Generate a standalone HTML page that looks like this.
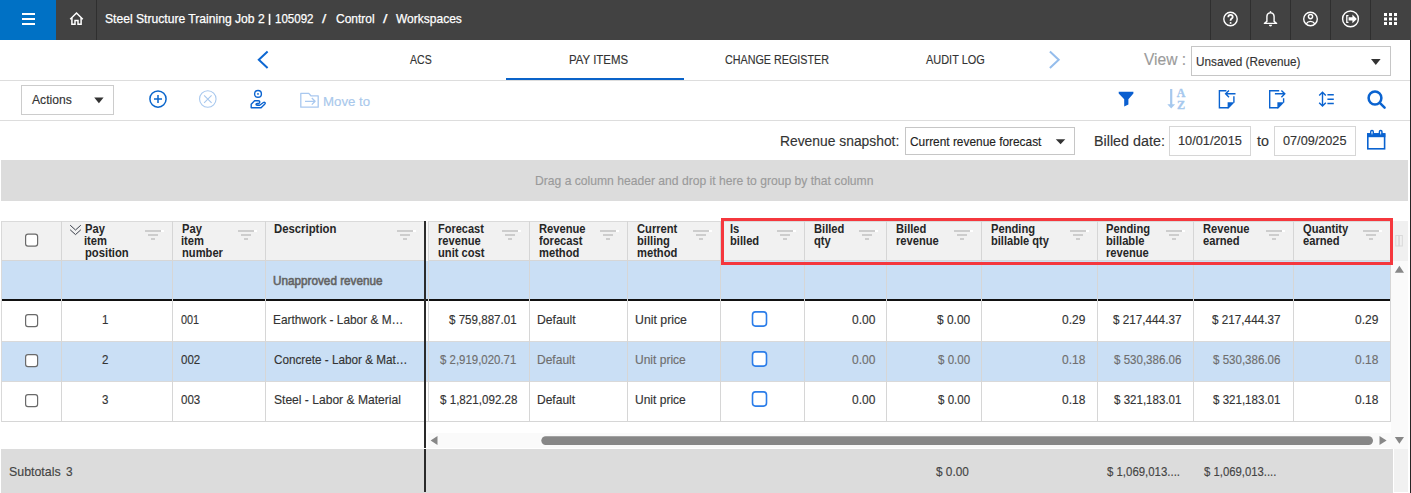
<!DOCTYPE html>
<html><head><meta charset="utf-8"><style>
html,body{margin:0;padding:0;width:1411px;height:493px;overflow:hidden;background:#fff;}
body{position:relative;font-family:"Liberation Sans",sans-serif;}
.tx{position:absolute;white-space:nowrap;line-height:1;transform-origin:0 0;}
.a{position:absolute;}
</style></head><body>
<svg class="a" style="left:0;top:0" width="1411" height="493" viewBox="0 0 1411 493">
<g shape-rendering="crispEdges">
  <!-- top bar -->
  <rect x="0" y="0" width="1411" height="40" fill="#424242"/>
  <rect x="0" y="0" width="56" height="40" fill="#0071c5"/>
  <rect x="96" y="0" width="1" height="40" fill="#2f2f2f"/>
  <rect x="1210" y="0" width="1" height="40" fill="#2f2f2f"/>
  <rect x="1250" y="0" width="1" height="40" fill="#2f2f2f"/>
  <rect x="1290" y="0" width="1" height="40" fill="#2f2f2f"/>
  <rect x="1330" y="0" width="1" height="40" fill="#2f2f2f"/>
  <rect x="1370" y="0" width="1" height="40" fill="#2f2f2f"/>
  <rect x="268.7" y="13.8" width="1.7" height="11.2" fill="#fff" shape-rendering="auto"/>
  <!-- hamburger -->
  <rect x="22" y="13" width="13" height="2" fill="#fff"/>
  <rect x="22" y="18" width="13" height="2" fill="#fff"/>
  <rect x="22" y="23" width="13" height="2" fill="#fff"/>
  <!-- right border -->
  <rect x="1410" y="40" width="1" height="453" fill="#262626"/>
  <!-- nav line -->
  <rect x="0" y="80" width="1410" height="1" fill="#dddddd"/>
  <rect x="506" y="78" width="178" height="2" fill="#0a63c9"/>
  <!-- view dropdown -->
  <rect x="1191.5" y="46.5" width="199" height="29" fill="#fff" stroke="#c6c6c6" stroke-width="1"/>
  <!-- toolbar line -->
  <rect x="0" y="120" width="1410" height="1" fill="#dddddd"/>
  <rect x="21.5" y="85.5" width="92" height="29" fill="#fff" stroke="#cccccc" stroke-width="1"/>
  <!-- snapshot -->
  <rect x="905.5" y="127.5" width="169" height="27" fill="#fff" stroke="#c6c6c6" stroke-width="1"/>
  <rect x="1169.5" y="126.5" width="81" height="29" fill="#fff" stroke="#d6d6d6" stroke-width="1"/>
  <rect x="1274.5" y="126.5" width="81" height="29" fill="#fff" stroke="#d6d6d6" stroke-width="1"/>
  <!-- group bar -->
  <rect x="1" y="160" width="1407" height="41" fill="#dcdcdc"/>
  <!-- grid header -->
  <rect x="1" y="221" width="1390" height="39" fill="#f1f1f1"/>
  <rect x="1" y="221" width="1390" height="1" fill="#dadada"/>
  <rect x="1" y="260" width="1390" height="1" fill="#d6d6d6"/>
  <rect x="1391" y="221" width="17" height="40" fill="#f0f0f0"/>
  <!-- unapproved row -->
  <rect x="1" y="261" width="1390" height="38" fill="#cadff5"/>
  <rect x="1" y="299" width="1390" height="2" fill="#111"/>
  <!-- row 2 -->
  <rect x="1" y="341" width="1390" height="40" fill="#cadff5"/>
  <rect x="1" y="341" width="1390" height="1" fill="#d9d9d9"/>
  <rect x="1" y="381" width="1390" height="1" fill="#d9d9d9"/>
  <rect x="1" y="421" width="1390" height="1" fill="#d6d6d6"/>
  <!-- left border -->
  <rect x="1" y="221" width="1" height="201" fill="#d9d9d9"/>
  <!-- column lines -->
  <g fill="#d6d6d6">
    <rect x="61" y="221" width="1" height="201"/>
    <rect x="172" y="221" width="1" height="201"/>
    <rect x="265" y="221" width="1" height="201"/>
    <rect x="428" y="221" width="1" height="201"/>
    <rect x="529" y="221" width="1" height="201"/>
    <rect x="627" y="221" width="1" height="201"/>
    <rect x="720" y="221" width="1" height="201"/>
    <rect x="804" y="221" width="1" height="201"/>
    <rect x="886" y="221" width="1" height="201"/>
    <rect x="981" y="221" width="1" height="201"/>
    <rect x="1097" y="221" width="1" height="201"/>
    <rect x="1193" y="221" width="1" height="201"/>
    <rect x="1293" y="221" width="1" height="201"/>
    <rect x="1390" y="221" width="1" height="201"/>
  </g>
  <!-- h scroll track -->
  <rect x="1391" y="261" width="17" height="188" fill="#fafafa"/>
  <rect x="428" y="433" width="963" height="15" fill="#fafafa"/>
  <!-- footer -->
  <rect x="1" y="449" width="1392" height="44" fill="#dcdcdc"/>
  <rect x="1393" y="449" width="1" height="44" fill="#ffffff"/>
  <rect x="1394" y="449" width="14" height="43" fill="#f1f1f1"/>
  <!-- frozen divider -->
  <rect x="424" y="221" width="2" height="227" fill="#2b2b2b"/>
  <rect x="424" y="449" width="2" height="43" fill="#2b2b2b"/>
  <rect x="426" y="221" width="2" height="40" fill="#f7f7f7"/>
</g>

<!-- ===== icons ===== -->
<g fill="none" stroke="#fff" stroke-width="1.5" stroke-linejoin="miter">
  <!-- home -->
  <path d="M70.2 19.2 L76.5 13 L82.8 19.2"/>
  <path d="M71.9 18 V24.2 H75 V20.4 H78 V24.2 H81.1 V18"/>
  <!-- help -->
  <circle cx="1230.5" cy="19" r="6.7" stroke-width="1.4"/>
  <path d="M1228.3 17.2 C1228.3 15.6 1229.3 14.9 1230.5 14.9 C1231.8 14.9 1232.7 15.7 1232.7 16.9 C1232.7 18.4 1230.6 18.6 1230.6 20.3 V20.8" stroke-width="1.8"/>
  <!-- user -->
  <circle cx="1310.5" cy="19" r="6.8" stroke-width="1.4"/>
  <circle cx="1310.5" cy="16.6" r="2.1" stroke-width="1.4"/>
  <path d="M1306.2 23.8 C1307.2 22.2 1308.7 21.4 1310.5 21.4 C1312.3 21.4 1313.8 22.2 1314.8 23.8" stroke-width="1.4"/>
  <!-- logout -->
  <circle cx="1350.5" cy="18.9" r="7.9" stroke-width="1.4"/>
  <path d="M1348.5 15.6 H1346.8 V22.3 H1348.5" stroke-width="1.3"/>
</g>
<g fill="#fff">
  <circle cx="1230.6" cy="22.9" r="0.95"/>
  <path d="M1348.6 17.3 H1352.4 V14.6 L1356.9 18.9 L1352.4 23.2 V20.5 H1348.6 Z"/>
  <!-- bell -->
  <path d="M1270.5 12 C1267.6 12.1 1266.2 14.1 1266.2 16.6 V21.1 L1263.8 23.1 V24.1 H1277.2 V23.1 L1274.8 21.1 V16.6 C1274.8 14.1 1273.4 12.1 1270.5 12 Z M1267.6 16.7 C1267.6 14.6 1268.7 13.4 1270.5 13.4 C1272.3 13.4 1273.4 14.6 1273.4 16.7 V21.7 L1274.7 22.8 H1266.3 L1267.6 21.7 Z" fill-rule="evenodd"/>
  <circle cx="1270.5" cy="11.7" r="0.8"/>
  <path d="M1268.9 24.7 H1272.1 A1.6 1.7 0 0 1 1268.9 24.7 Z"/>
  <!-- grid -->
  <rect x="1384" y="13" width="3" height="3"/><rect x="1389" y="13" width="3" height="3"/><rect x="1394" y="13" width="3" height="3"/>
  <rect x="1384" y="17.5" width="3" height="3"/><rect x="1389" y="17.5" width="3" height="3"/><rect x="1394" y="17.5" width="3" height="3"/>
  <rect x="1384" y="22" width="3" height="3"/><rect x="1389" y="22" width="3" height="3"/><rect x="1394" y="22" width="3" height="3"/>
</g>
<!-- nav chevrons -->
<path d="M267.6 51.5 L258.8 59.8 L267.6 68.1" fill="none" stroke="#0d67d2" stroke-width="2"/>
<path d="M1049.9 51.5 L1058.7 59.8 L1049.9 68.1" fill="none" stroke="#95bdec" stroke-width="2"/>
<!-- dropdown triangles -->
<path d="M1371 59 H1380.6 L1375.8 65 Z" fill="#333"/>
<path d="M94.2 97.5 H103.6 L98.9 103.2 Z" fill="#333"/>
<path d="M1055.8 139.2 H1065.3 L1060.55 144.2 Z" fill="#333"/>
<!-- toolbar left icons -->
<g fill="none" stroke="#0a66cc" stroke-width="1.5">
  <circle cx="158" cy="99.05" r="8.1"/>
  <path d="M154 99.1 H162 M158 95.1 V103.1"/>
</g>
<g fill="none" stroke="#a8c8ee" stroke-width="1.1">
  <circle cx="207.8" cy="99" r="8.25"/>
  <path d="M204.1 95.3 L211.6 102.8 M211.6 95.3 L204.1 102.8"/>
</g>
<g fill="none" stroke="#0a63d0" stroke-width="1.4" stroke-linejoin="round">
  <circle cx="258" cy="93.9" r="3.4"/>
  <path d="M261.1 107.7 H251.2 V104.3 L254.6 100.7 H258.4 C260.3 100.7 260.3 103.5 258.4 103.5 H257.2 C255.6 103.5 255.6 105.2 257.2 105.2 H259.7 L263.4 102.5 C264.5 101.8 265.7 102.9 264.9 103.9 Z"/>
</g>
<circle cx="258" cy="93.9" r="0.9" fill="#0a63d0"/>
<g fill="none" stroke="#a9c8ef" stroke-width="1.3" stroke-linejoin="round">
  <path d="M300.8 93.4 H308.8 L310.9 95.8 H318.2 V107.2 H300.8 Z"/>
  <path d="M305 101.3 H315 M311.8 98 L315.1 101.3 L311.8 104.6"/>
</g>
<!-- right toolbar icons -->
<path d="M1118.7 91.8 H1133.4 V93.4 L1128.4 99.2 V104.6 L1124.2 106.6 V99.2 L1118.7 93.4 Z" fill="#0a5fd0"/>
<g fill="#a6c8ee">
  <rect x="1170.1" y="89" width="2.2" height="16.5"/>
  <path d="M1167.3 104.3 H1175.1 L1171.2 108.6 Z"/>
</g>
<text x="1181.1" y="97.1" font-family="Liberation Serif" font-weight="bold" font-size="11.8" text-anchor="middle" fill="#a6c8ee" stroke="#a6c8ee" stroke-width="0.3">A</text>
<text x="1181.1" y="108.6" font-family="Liberation Serif" font-weight="bold" font-size="12.2" text-anchor="middle" fill="#a6c8ee" stroke="#a6c8ee" stroke-width="0.3">Z</text>
<g fill="none" stroke="#0a63d0" stroke-width="1.4">
  <path d="M1226.4 90.7 H1219.4 V107.7 H1228.3 M1233.9 96.2 V102.6"/>
  <path d="M1225.6 93.8 H1235.5 M1229 90.4 L1225.6 93.8 L1229 97.2"/>
  <path d="M1279.2 90.7 H1269.7 V107.7 H1278.1 M1283.6 98.3 V102.6"/>
  <path d="M1274.9 93.8 H1284.8 M1281.4 90.4 L1284.8 93.8 L1281.4 97.2"/>
  <path d="M1322.5 92.6 V105.8 M1319.2 95.6 L1322.5 92.3 L1325.8 95.6 M1319.2 102.8 L1322.5 106.1 L1325.8 102.8 M1327.4 94.8 H1333.8 M1327.4 99.3 H1333.8 M1327.4 103.5 H1333.8"/>
</g>
<g fill="#0a63d0">
  <path d="M1227.6 102.3 H1234.6 L1228.6 108.4 H1227.6 Z"/>
  <path d="M1277.4 102.3 H1284.3 L1278.3 108.4 H1277.4 Z"/>
</g>
<g fill="none" stroke="#0a63d0" stroke-width="2.5" stroke-linecap="round">
  <circle cx="1375" cy="98" r="6.4"/>
  <path d="M1380.3 103.3 L1384.6 107.6"/>
</g>
<!-- calendar -->
<g fill="none" stroke="#0a63d0" stroke-width="1.6">
  <rect x="1367.8" y="134" width="16.8" height="14.8"/>
  <rect x="1370.8" y="130.6" width="2.4" height="4.6" rx="1.1"/>
  <rect x="1379.5" y="130.6" width="2.4" height="4.6" rx="1.1"/>
</g>
<rect x="1367" y="133.2" width="18.4" height="4" fill="#0a63d0"/>
<rect x="1371.6" y="131.4" width="0.8" height="3" fill="#fff"/>
<rect x="1380.3" y="131.4" width="0.8" height="3" fill="#fff"/>
<!-- header checkbox & row checkboxes -->
<g fill="#fff" stroke="#6a6a6a" stroke-width="1.2">
  <rect x="25.6" y="234.2" width="12" height="12" rx="2.4"/>
  <rect x="25.6" y="314.6" width="12" height="12" rx="2.4"/>
  <rect x="25.6" y="354.6" width="12" height="12" rx="2.4"/>
  <rect x="25.6" y="394.6" width="12" height="12" rx="2.4"/>
</g>
<g fill="#fff" stroke="#2b7de9" stroke-width="1.6">
  <rect x="752.5" y="311.9" width="14" height="14.2" rx="3"/>
  <rect x="752.5" y="351.9" width="14" height="14.2" rx="3"/>
  <rect x="752.5" y="391.9" width="14" height="14.2" rx="3"/>
</g>
<!-- double chevron -->
<path d="M70.2 225.2 L75.5 230 L80.8 225.2 M70.2 229.8 L75.5 234.6 L80.8 229.8" fill="none" stroke="#3a3f4a" stroke-width="1"/>
<!-- header filter icons -->
<g shape-rendering="crispEdges">
  <rect x="145" y="230" width="16" height="2" fill="#cdcdcd"/><rect x="161" y="230" width="3" height="2" fill="#fff"/><rect x="148" y="234" width="10" height="2" fill="#cdcdcd"/><rect x="151" y="238" width="4" height="2" fill="#cdcdcd"/>
  <rect x="238" y="230" width="16" height="2" fill="#cdcdcd"/><rect x="254" y="230" width="3" height="2" fill="#fff"/><rect x="241" y="234" width="10" height="2" fill="#cdcdcd"/><rect x="244" y="238" width="4" height="2" fill="#cdcdcd"/>
  <rect x="397" y="230" width="16" height="2" fill="#cdcdcd"/><rect x="413" y="230" width="3" height="2" fill="#fff"/><rect x="400" y="234" width="10" height="2" fill="#cdcdcd"/><rect x="403" y="238" width="4" height="2" fill="#cdcdcd"/>
  <rect x="502" y="230" width="16" height="2" fill="#cdcdcd"/><rect x="518" y="230" width="3" height="2" fill="#fff"/><rect x="505" y="234" width="10" height="2" fill="#cdcdcd"/><rect x="508" y="238" width="4" height="2" fill="#cdcdcd"/>
  <rect x="600" y="230" width="16" height="2" fill="#cdcdcd"/><rect x="616" y="230" width="3" height="2" fill="#fff"/><rect x="603" y="234" width="10" height="2" fill="#cdcdcd"/><rect x="606" y="238" width="4" height="2" fill="#cdcdcd"/>
  <rect x="693" y="230" width="16" height="2" fill="#cdcdcd"/><rect x="709" y="230" width="3" height="2" fill="#fff"/><rect x="696" y="234" width="10" height="2" fill="#cdcdcd"/><rect x="699" y="238" width="4" height="2" fill="#cdcdcd"/>
  <rect x="777" y="230" width="16" height="2" fill="#cdcdcd"/><rect x="793" y="230" width="3" height="2" fill="#fff"/><rect x="780" y="234" width="10" height="2" fill="#cdcdcd"/><rect x="783" y="238" width="4" height="2" fill="#cdcdcd"/>
  <rect x="859" y="230" width="16" height="2" fill="#cdcdcd"/><rect x="875" y="230" width="3" height="2" fill="#fff"/><rect x="862" y="234" width="10" height="2" fill="#cdcdcd"/><rect x="865" y="238" width="4" height="2" fill="#cdcdcd"/>
  <rect x="954" y="230" width="16" height="2" fill="#cdcdcd"/><rect x="970" y="230" width="3" height="2" fill="#fff"/><rect x="957" y="234" width="10" height="2" fill="#cdcdcd"/><rect x="960" y="238" width="4" height="2" fill="#cdcdcd"/>
  <rect x="1070" y="230" width="16" height="2" fill="#cdcdcd"/><rect x="1086" y="230" width="3" height="2" fill="#fff"/><rect x="1073" y="234" width="10" height="2" fill="#cdcdcd"/><rect x="1076" y="238" width="4" height="2" fill="#cdcdcd"/>
  <rect x="1166" y="230" width="16" height="2" fill="#cdcdcd"/><rect x="1182" y="230" width="3" height="2" fill="#fff"/><rect x="1169" y="234" width="10" height="2" fill="#cdcdcd"/><rect x="1172" y="238" width="4" height="2" fill="#cdcdcd"/>
  <rect x="1266" y="230" width="16" height="2" fill="#cdcdcd"/><rect x="1282" y="230" width="3" height="2" fill="#fff"/><rect x="1269" y="234" width="10" height="2" fill="#cdcdcd"/><rect x="1272" y="238" width="4" height="2" fill="#cdcdcd"/>
  <rect x="1363" y="230" width="16" height="2" fill="#cdcdcd"/><rect x="1379" y="230" width="3" height="2" fill="#fff"/><rect x="1366" y="234" width="10" height="2" fill="#cdcdcd"/><rect x="1369" y="238" width="4" height="2" fill="#cdcdcd"/>
</g>
<!-- column chooser -->
<g fill="none" stroke="#d9d9d9" stroke-width="1">
  <rect x="1395.8" y="235.5" width="3" height="10.5"/>
  <rect x="1399.3" y="235.5" width="3" height="10.5"/>
</g>
<!-- scroll arrows -->
<g fill="#878787">
  <path d="M1394.8 272.8 L1399.4 265.8 L1404 272.8 Z"/>
  <path d="M1394.8 437 H1404 L1399.4 443.8 Z"/>
  <path d="M437.5 436 V445 L430.6 440.5 Z"/>
  <path d="M1379.5 436 V445 L1386.6 440.5 Z"/>
  <rect x="541.3" y="436.2" width="831.7" height="8.8" rx="4.4"/>
</g>
<!-- red highlight -->
<rect x="722.5" y="219.5" width="669" height="44" fill="none" stroke="#f5373d" stroke-width="3"/>
</svg>

<div class="tx" style="left:105.00px;top:11.70px;font-size:13px;font-weight:400;color:#ffffff;-webkit-text-stroke:0.25px currentColor;transform:scaleX(0.9322)">Steel Structure Training Job 2</div>
<div class="tx" style="left:275.00px;top:11.70px;font-size:13px;font-weight:400;color:#ffffff;-webkit-text-stroke:0.25px currentColor;transform:scaleX(0.8864)">105092</div>
<div class="tx" style="left:322.10px;top:11.70px;font-size:13px;font-weight:400;color:#ffffff;-webkit-text-stroke:0.25px currentColor;transform:scaleX(1.1750)">/</div>
<div class="tx" style="left:335.60px;top:11.70px;font-size:13px;font-weight:400;color:#ffffff;-webkit-text-stroke:0.25px currentColor;transform:scaleX(0.9214)">Control</div>
<div class="tx" style="left:382.80px;top:11.70px;font-size:13px;font-weight:400;color:#ffffff;-webkit-text-stroke:0.25px currentColor;transform:scaleX(1.2250)">/</div>
<div class="tx" style="left:395.50px;top:11.70px;font-size:13px;font-weight:400;color:#ffffff;-webkit-text-stroke:0.25px currentColor;transform:scaleX(0.9239)">Workspaces</div>
<div class="tx" style="left:410.20px;top:54.00px;font-size:12.5px;font-weight:400;color:#333;-webkit-text-stroke:0.15px currentColor;transform:scaleX(0.8423)">ACS</div>
<div class="tx" style="left:568.99px;top:54.00px;font-size:12.5px;font-weight:400;color:#333;-webkit-text-stroke:0.15px currentColor;transform:scaleX(0.9141)">PAY ITEMS</div>
<div class="tx" style="left:724.80px;top:54.00px;font-size:12.5px;font-weight:400;color:#333;-webkit-text-stroke:0.15px currentColor;transform:scaleX(0.8603)">CHANGE REGISTER</div>
<div class="tx" style="left:925.60px;top:54.00px;font-size:12.5px;font-weight:400;color:#333;-webkit-text-stroke:0.15px currentColor;transform:scaleX(0.8761)">AUDIT LOG</div>
<div class="tx" style="left:1143.50px;top:50.90px;font-size:17px;font-weight:400;color:#9b9b9b;-webkit-text-stroke:0.15px currentColor;transform:scaleX(0.9178)">View :</div>
<div class="tx" style="left:1196.40px;top:54.90px;font-size:13px;font-weight:400;color:#333;-webkit-text-stroke:0.15px currentColor;transform:scaleX(0.9035)">Unsaved (Revenue)</div>
<div class="tx" style="left:32.30px;top:92.70px;font-size:13px;font-weight:400;color:#333;-webkit-text-stroke:0.15px currentColor;transform:scaleX(0.9326)">Actions</div>
<div class="tx" style="left:323.32px;top:95.00px;font-size:13.5px;font-weight:400;color:#a9c8ec;-webkit-text-stroke:0.15px currentColor;transform:scaleX(0.9809)">Move to</div>
<div class="tx" style="left:780.01px;top:133.10px;font-size:15.5px;font-weight:400;color:#333;-webkit-text-stroke:0.15px currentColor;transform:scaleX(0.8932)">Revenue snapshot:</div>
<div class="tx" style="left:910.20px;top:134.60px;font-size:13.5px;font-weight:400;color:#222;-webkit-text-stroke:0.15px currentColor;transform:scaleX(0.8800)">Current revenue forecast</div>
<div class="tx" style="left:1094.08px;top:133.10px;font-size:15.5px;font-weight:400;color:#333;-webkit-text-stroke:0.15px currentColor;transform:scaleX(0.9240)">Billed date:</div>
<div class="tx" style="left:1178.22px;top:134.20px;font-size:13px;font-weight:400;color:#333;-webkit-text-stroke:0.15px currentColor;transform:scaleX(0.9812)">10/01/2015</div>
<div class="tx" style="left:1256.50px;top:133.10px;font-size:15.5px;font-weight:400;color:#333;-webkit-text-stroke:0.15px currentColor;transform:scaleX(0.9231)">to</div>
<div class="tx" style="left:1283.30px;top:134.20px;font-size:13px;font-weight:400;color:#333;-webkit-text-stroke:0.15px currentColor;transform:scaleX(0.9754)">07/09/2025</div>
<div class="tx" style="left:535.40px;top:174.40px;font-size:13.5px;font-weight:400;color:#9a9a9a;-webkit-text-stroke:0.15px currentColor;transform:scaleX(0.8984)">Drag a column header and drop it here to group by that column</div>
<div class="tx" style="left:84.70px;top:222.60px;font-size:12.3px;font-weight:700;color:#262626;transform:scaleX(0.9079)">Pay</div>
<div class="tx" style="left:83.79px;top:235.00px;font-size:12.3px;font-weight:700;color:#262626;transform:scaleX(0.9079)">item</div>
<div class="tx" style="left:84.70px;top:247.00px;font-size:12.3px;font-weight:700;color:#262626;transform:scaleX(0.9149)">position</div>
<div class="tx" style="left:181.90px;top:222.60px;font-size:12.3px;font-weight:700;color:#262626;transform:scaleX(0.9079)">Pay</div>
<div class="tx" style="left:180.99px;top:235.00px;font-size:12.3px;font-weight:700;color:#262626;transform:scaleX(0.9079)">item</div>
<div class="tx" style="left:181.90px;top:247.00px;font-size:12.3px;font-weight:700;color:#262626;transform:scaleX(0.9079)">number</div>
<div class="tx" style="left:274.30px;top:222.60px;font-size:12.3px;font-weight:700;color:#262626;transform:scaleX(0.9224)">Description</div>
<div class="tx" style="left:437.70px;top:222.60px;font-size:12.3px;font-weight:700;color:#262626;transform:scaleX(0.8942)">Forecast</div>
<div class="tx" style="left:437.70px;top:235.00px;font-size:12.3px;font-weight:700;color:#262626;transform:scaleX(0.9079)">revenue</div>
<div class="tx" style="left:437.70px;top:247.00px;font-size:12.3px;font-weight:700;color:#262626;transform:scaleX(0.9079)">unit cost</div>
<div class="tx" style="left:538.60px;top:222.60px;font-size:12.3px;font-weight:700;color:#262626;transform:scaleX(0.9079)">Revenue</div>
<div class="tx" style="left:538.60px;top:235.00px;font-size:12.3px;font-weight:700;color:#262626;transform:scaleX(0.9079)">forecast</div>
<div class="tx" style="left:538.60px;top:247.00px;font-size:12.3px;font-weight:700;color:#262626;transform:scaleX(0.9079)">method</div>
<div class="tx" style="left:636.60px;top:222.60px;font-size:12.3px;font-weight:700;color:#262626;transform:scaleX(0.9079)">Current</div>
<div class="tx" style="left:636.60px;top:235.00px;font-size:12.3px;font-weight:700;color:#262626;transform:scaleX(0.9079)">billing</div>
<div class="tx" style="left:636.60px;top:247.00px;font-size:12.3px;font-weight:700;color:#262626;transform:scaleX(0.9079)">method</div>
<div class="tx" style="left:729.80px;top:222.60px;font-size:12.3px;font-weight:700;color:#262626;transform:scaleX(0.9079)">Is</div>
<div class="tx" style="left:729.80px;top:235.00px;font-size:12.3px;font-weight:700;color:#262626;transform:scaleX(0.9079)">billed</div>
<div class="tx" style="left:814.00px;top:222.60px;font-size:12.3px;font-weight:700;color:#262626;transform:scaleX(0.9079)">Billed</div>
<div class="tx" style="left:814.00px;top:235.00px;font-size:12.3px;font-weight:700;color:#262626;transform:scaleX(0.9079)">qty</div>
<div class="tx" style="left:895.80px;top:222.60px;font-size:12.3px;font-weight:700;color:#262626;transform:scaleX(0.9079)">Billed</div>
<div class="tx" style="left:895.80px;top:235.00px;font-size:12.3px;font-weight:700;color:#262626;transform:scaleX(0.9079)">revenue</div>
<div class="tx" style="left:990.80px;top:222.60px;font-size:12.3px;font-weight:700;color:#262626;transform:scaleX(0.9079)">Pending</div>
<div class="tx" style="left:990.80px;top:235.00px;font-size:12.3px;font-weight:700;color:#262626;transform:scaleX(0.9000)">billable qty</div>
<div class="tx" style="left:1106.30px;top:222.60px;font-size:12.3px;font-weight:700;color:#262626;transform:scaleX(0.9079)">Pending</div>
<div class="tx" style="left:1106.30px;top:235.00px;font-size:12.3px;font-weight:700;color:#262626;transform:scaleX(0.9079)">billable</div>
<div class="tx" style="left:1106.30px;top:247.00px;font-size:12.3px;font-weight:700;color:#262626;transform:scaleX(0.9079)">revenue</div>
<div class="tx" style="left:1203.20px;top:222.60px;font-size:12.3px;font-weight:700;color:#262626;transform:scaleX(0.9079)">Revenue</div>
<div class="tx" style="left:1203.20px;top:235.00px;font-size:12.3px;font-weight:700;color:#262626;transform:scaleX(0.9079)">earned</div>
<div class="tx" style="left:1302.70px;top:222.60px;font-size:12.3px;font-weight:700;color:#262626;transform:scaleX(0.9079)">Quantity</div>
<div class="tx" style="left:1302.70px;top:235.00px;font-size:12.3px;font-weight:700;color:#262626;transform:scaleX(0.9079)">earned</div>
<div class="tx" style="left:273.30px;top:274.20px;font-size:13px;font-weight:400;color:#636363;-webkit-text-stroke:0.6px currentColor;transform:scaleX(0.9025)">Unapproved revenue</div>
<div class="tx" style="left:101.95px;top:313.00px;font-size:13px;font-weight:400;color:#333;-webkit-text-stroke:0.15px currentColor;transform:scaleX(0.8886)">1</div>
<div class="tx" style="left:180.60px;top:313.00px;font-size:13px;font-weight:400;color:#333;-webkit-text-stroke:0.15px currentColor;transform:scaleX(0.8364)">001</div>
<div class="tx" style="left:272.79px;top:313.00px;font-size:13px;font-weight:400;color:#333;-webkit-text-stroke:0.15px currentColor;transform:scaleX(0.9113)">Earthwork - Labor &amp; M…</div>
<div class="tx" style="left:448.50px;top:313.00px;font-size:13px;font-weight:400;color:#333;-webkit-text-stroke:0.15px currentColor;transform:scaleX(0.8908)">$ 759,887.01</div>
<div class="tx" style="left:536.86px;top:313.00px;font-size:13px;font-weight:400;color:#333;-webkit-text-stroke:0.15px currentColor;transform:scaleX(0.9366)">Default</div>
<div class="tx" style="left:634.65px;top:313.00px;font-size:13px;font-weight:400;color:#333;-webkit-text-stroke:0.15px currentColor;transform:scaleX(0.9463)">Unit price</div>
<div class="tx" style="left:851.80px;top:313.00px;font-size:13px;font-weight:400;color:#333;-webkit-text-stroke:0.15px currentColor;transform:scaleX(0.9240)">0.00</div>
<div class="tx" style="left:936.50px;top:313.00px;font-size:13px;font-weight:400;color:#333;-webkit-text-stroke:0.15px currentColor;transform:scaleX(0.9167)">$ 0.00</div>
<div class="tx" style="left:1062.10px;top:313.00px;font-size:13px;font-weight:400;color:#333;-webkit-text-stroke:0.15px currentColor;transform:scaleX(0.9200)">0.29</div>
<div class="tx" style="left:1113.00px;top:313.00px;font-size:13px;font-weight:400;color:#333;-webkit-text-stroke:0.15px currentColor;transform:scaleX(0.9013)">$ 217,444.37</div>
<div class="tx" style="left:1212.40px;top:313.00px;font-size:13px;font-weight:400;color:#333;-webkit-text-stroke:0.15px currentColor;transform:scaleX(0.9026)">$ 217,444.37</div>
<div class="tx" style="left:1355.15px;top:313.00px;font-size:13px;font-weight:400;color:#333;-webkit-text-stroke:0.15px currentColor;transform:scaleX(0.9220)">0.29</div>
<div class="tx" style="left:102.39px;top:353.00px;font-size:13px;font-weight:400;color:#333;-webkit-text-stroke:0.15px currentColor;transform:scaleX(0.8886)">2</div>
<div class="tx" style="left:180.60px;top:353.00px;font-size:13px;font-weight:400;color:#333;-webkit-text-stroke:0.15px currentColor;transform:scaleX(0.8886)">002</div>
<div class="tx" style="left:273.60px;top:353.00px;font-size:13px;font-weight:400;color:#333;-webkit-text-stroke:0.15px currentColor;transform:scaleX(0.9020)">Concrete - Labor &amp; Mat…</div>
<div class="tx" style="left:439.50px;top:353.00px;font-size:13px;font-weight:400;color:#6e6e6e;-webkit-text-stroke:0.15px currentColor;transform:scaleX(0.8793)">$ 2,919,020.71</div>
<div class="tx" style="left:536.88px;top:353.00px;font-size:13px;font-weight:400;color:#6e6e6e;-webkit-text-stroke:0.15px currentColor;transform:scaleX(0.9250)">Default</div>
<div class="tx" style="left:634.68px;top:353.00px;font-size:13px;font-weight:400;color:#6e6e6e;-webkit-text-stroke:0.15px currentColor;transform:scaleX(0.9250)">Unit price</div>
<div class="tx" style="left:851.85px;top:353.00px;font-size:13px;font-weight:400;color:#6e6e6e;-webkit-text-stroke:0.15px currentColor;transform:scaleX(0.9220)">0.00</div>
<div class="tx" style="left:937.51px;top:353.00px;font-size:13px;font-weight:400;color:#6e6e6e;-webkit-text-stroke:0.15px currentColor;transform:scaleX(0.8886)">$ 0.00</div>
<div class="tx" style="left:1062.05px;top:353.00px;font-size:13px;font-weight:400;color:#6e6e6e;-webkit-text-stroke:0.15px currentColor;transform:scaleX(0.9220)">0.18</div>
<div class="tx" style="left:1113.97px;top:353.00px;font-size:13px;font-weight:400;color:#6e6e6e;-webkit-text-stroke:0.15px currentColor;transform:scaleX(0.8886)">$ 530,386.06</div>
<div class="tx" style="left:1213.47px;top:353.00px;font-size:13px;font-weight:400;color:#6e6e6e;-webkit-text-stroke:0.15px currentColor;transform:scaleX(0.8886)">$ 530,386.06</div>
<div class="tx" style="left:1355.15px;top:353.00px;font-size:13px;font-weight:400;color:#6e6e6e;-webkit-text-stroke:0.15px currentColor;transform:scaleX(0.9220)">0.18</div>
<div class="tx" style="left:102.39px;top:393.00px;font-size:13px;font-weight:400;color:#333;-webkit-text-stroke:0.15px currentColor;transform:scaleX(0.8886)">3</div>
<div class="tx" style="left:180.60px;top:393.00px;font-size:13px;font-weight:400;color:#333;-webkit-text-stroke:0.15px currentColor;transform:scaleX(0.8886)">003</div>
<div class="tx" style="left:273.60px;top:393.00px;font-size:13px;font-weight:400;color:#333;-webkit-text-stroke:0.15px currentColor;transform:scaleX(0.9287)">Steel - Labor &amp; Material</div>
<div class="tx" style="left:439.50px;top:393.00px;font-size:13px;font-weight:400;color:#333;-webkit-text-stroke:0.15px currentColor;transform:scaleX(0.8931)">$ 1,821,092.28</div>
<div class="tx" style="left:536.88px;top:393.00px;font-size:13px;font-weight:400;color:#333;-webkit-text-stroke:0.15px currentColor;transform:scaleX(0.9250)">Default</div>
<div class="tx" style="left:634.68px;top:393.00px;font-size:13px;font-weight:400;color:#333;-webkit-text-stroke:0.15px currentColor;transform:scaleX(0.9250)">Unit price</div>
<div class="tx" style="left:851.85px;top:393.00px;font-size:13px;font-weight:400;color:#333;-webkit-text-stroke:0.15px currentColor;transform:scaleX(0.9220)">0.00</div>
<div class="tx" style="left:937.51px;top:393.00px;font-size:13px;font-weight:400;color:#333;-webkit-text-stroke:0.15px currentColor;transform:scaleX(0.8886)">$ 0.00</div>
<div class="tx" style="left:1062.05px;top:393.00px;font-size:13px;font-weight:400;color:#333;-webkit-text-stroke:0.15px currentColor;transform:scaleX(0.9220)">0.18</div>
<div class="tx" style="left:1113.97px;top:393.00px;font-size:13px;font-weight:400;color:#333;-webkit-text-stroke:0.15px currentColor;transform:scaleX(0.8886)">$ 321,183.01</div>
<div class="tx" style="left:1213.47px;top:393.00px;font-size:13px;font-weight:400;color:#333;-webkit-text-stroke:0.15px currentColor;transform:scaleX(0.8886)">$ 321,183.01</div>
<div class="tx" style="left:1355.15px;top:393.00px;font-size:13px;font-weight:400;color:#333;-webkit-text-stroke:0.15px currentColor;transform:scaleX(0.9220)">0.18</div>
<div class="tx" style="left:9.40px;top:465.20px;font-size:13px;font-weight:400;color:#444;-webkit-text-stroke:0.15px currentColor;transform:scaleX(0.9519)">Subtotals</div>
<div class="tx" style="left:66.20px;top:465.20px;font-size:13px;font-weight:400;color:#444;-webkit-text-stroke:0.15px currentColor;transform:scaleX(0.9143)">3</div>
<div class="tx" style="left:936.30px;top:465.20px;font-size:13px;font-weight:400;color:#444;-webkit-text-stroke:0.15px currentColor;transform:scaleX(0.9083)">$ 0.00</div>
<div class="tx" style="left:1106.70px;top:465.20px;font-size:13px;font-weight:400;color:#444;-webkit-text-stroke:0.15px currentColor;transform:scaleX(0.8783)">$ 1,069,013....</div>
<div class="tx" style="left:1203.70px;top:465.20px;font-size:13px;font-weight:400;color:#444;-webkit-text-stroke:0.15px currentColor;transform:scaleX(0.8711)">$ 1,069,013....</div>
</body></html>
